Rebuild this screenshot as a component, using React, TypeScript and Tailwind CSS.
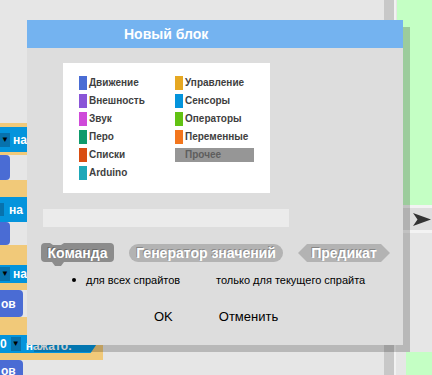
import React from "react";

const leftCats = [
  { name: "Движение", color: "bg-[#4a6cd4]" },
  { name: "Внешность", color: "bg-[#8a55d7]" },
  { name: "Звук", color: "bg-[#cf4ad9]" },
  { name: "Перо", color: "bg-[#0e9a6c]" },
  { name: "Списки", color: "bg-[#d94d11]" },
  { name: "Arduino", color: "bg-[#1ea8b8]" },
];

const rightCats = [
  { name: "Управление", color: "bg-[#e6a822]" },
  { name: "Сенсоры", color: "bg-[#0494dc]" },
  { name: "Операторы", color: "bg-[#62c213]" },
  { name: "Переменные", color: "bg-[#f3761d]" },
  { name: "Прочее", color: "bg-[#969696]", selected: true },
];

function Category({ name, color, selected }: { name: string; color: string; selected?: boolean }) {
  return (
    <div className={`flex h-[14px] w-[79px] items-center ${selected ? "bg-[#969696]" : ""}`}>
      <span className={`h-[14px] w-[8px] shrink-0 ${color}`} />
      <span
        className={`ml-[2px] text-[10px] font-bold leading-none ${
          selected ? "text-[#5e5e5e]" : "text-[#3f3f3f]"
        }`}
      >
        {name}
      </span>
    </div>
  );
}

const blockText =
  "absolute inset-0 flex items-center justify-center text-[14px] font-bold leading-none text-white [text-shadow:-1px_-1px_0_rgba(0,0,0,0.25)]";

function ShapeRow() {
  return (
    <div className="ml-[14px] mt-[16px] flex h-[19px] items-start gap-[15px]">
      {/* Command */}
      <div className="relative h-[23px] w-[73px] shrink-0">
        <svg width="73" height="23" className="absolute left-0 top-0">
          <path
            d="M0,4 Q0,0 4,0 L9,0 L12,2 L20,2 L23,0 L69,0 Q73,0 73,4 L73,15 Q73,19 69,19 L23,19 L20,23 L14,23 L11,19 L4,19 Q0,19 0,15 Z"
            fill="#8c8c8c"
          />
        </svg>
        <div className={`${blockText} h-[19px]`}>Команда</div>
      </div>
      {/* Reporter */}
      <div className="relative mt-[1px] h-[18px] w-[154px] shrink-0 rounded-full bg-[#b3b3b3]">
        <div className={blockText}>Генератор значений</div>
      </div>
      {/* Predicate */}
      <div className="relative mt-[1px] h-[18px] w-[92px] shrink-0">
        <svg width="92" height="18" className="absolute left-0 top-0">
          <polygon points="0,9 9,0 83,0 92,9 83,18 9,18" fill="#b3b3b3" />
        </svg>
        <div className={blockText}>Предикат</div>
      </div>
    </div>
  );
}

function Dialog() {
  return (
    <div className="absolute left-[27px] top-[20px] z-10 flex h-[325px] w-[376px] flex-col bg-[#dddddd] shadow-[7px_7px_0_rgba(0,0,0,0.2)]">
      {/* Title */}
      <div className="flex h-[28px] shrink-0 items-center bg-[#74b3f0] pl-[97px] text-[14px] font-bold text-white">
        Новый блок
      </div>

      {/* Categories */}
      <div className="ml-[36px] mt-[15px] flex h-[130px] w-[207px] bg-white pl-[16px] pt-[13px]">
        <div className="flex w-[96px] flex-col gap-[4px]">
          {leftCats.map((c) => (
            <Category key={c.name} {...c} />
          ))}
        </div>
        <div className="flex flex-col gap-[4px]">
          {rightCats.map((c) => (
            <Category key={c.name} {...c} />
          ))}
        </div>
      </div>

      {/* Name input */}
      <div className="ml-[16px] mt-[16px] h-[18px] w-[246px] bg-[#ebebeb]" />

      <ShapeRow />

      {/* Scope */}
      <div className="mt-[12px] flex h-[12px] items-center pl-[45px] text-[11px] leading-none text-black">
        <span className="h-[4px] w-[4px] rounded-full bg-black" />
        <span className="ml-[10px] w-[130px]">для всех спрайтов</span>
        <span>только для текущего спрайта</span>
      </div>

      {/* Buttons */}
      <div className="mt-[22px] flex h-[16px] items-center gap-[46px] pl-[127px] text-[13px] leading-none text-black">
        <span>OK</span>
        <span>Отменить</span>
      </div>
    </div>
  );
}

const label = "text-[12px] font-bold leading-none text-white";

function Dropdown({ children }: { children?: React.ReactNode }) {
  return (
    <div className="flex h-[14px] w-[10px] shrink-0 items-center justify-center bg-[#0772ad] text-[8px] text-black">
      {children}
    </div>
  );
}

function Mouth({ h, w, children }: { h: string; w: string; children: React.ReactNode }) {
  return (
    <div className={`flex w-[40px] bg-[#e6e6e6] ${h}`}>
      <div className={`flex h-full items-center justify-end rounded-r-[4px] bg-[#4a6cd4] pr-[10px] ${w}`}>
        {children}
      </div>
    </div>
  );
}

function ScriptArea() {
  return (
    <div className="absolute left-0 top-[123px] flex flex-col items-start">
      <div className="h-[4px] w-[40px] bg-[#f1c979]" />
      <div className="flex h-[25px] w-[40px] items-center gap-[3px] bg-[#0494dc]">
        <Dropdown>▼</Dropdown>
        <span className={label}>на</span>
      </div>
      <div className="h-[3px] w-[40px] bg-[#f1c979]" />
      <Mouth h="h-[25px]" w="w-[4px]">{null}</Mouth>
      <div className="h-[17px] w-[40px] bg-[#f1c979]" />
      <div className="flex h-[25px] w-[40px] items-center gap-[5px] bg-[#0494dc]">
        <div className="h-[13px] w-[4px] bg-[#0772ad]" />
        <span className={label}>на</span>
      </div>
      <Mouth h="h-[23px]" w="w-[8px]">{null}</Mouth>
      <div className="h-[20px] w-[40px] bg-[#f1c979]" />
      <div className="flex h-[18px] w-[40px] items-center gap-[3px] bg-[#0494dc]">
        <Dropdown>▼</Dropdown>
        <span className={label}>на</span>
      </div>
      <div className="h-[7px] w-[40px] bg-[#f1c979]" />
      <Mouth h="h-[27px]" w="w-[23px]">
        <span className={`${label} -mr-[10px] w-[23px] pl-[1px]`}>ов</span>
      </Mouth>
      <div className="h-[18px] w-[40px] bg-[#f1c979]" />
      <div className="flex w-[103px] flex-col bg-[#f1c979]">
        <div className="flex h-[18px] w-[103px] items-center gap-[4px] bg-[#0494dc] [clip-path:polygon(0_0,100%_0,88%_100%,0_100%)]">
          <span className={label}>0</span>
          <Dropdown>▼</Dropdown>
          <span className={`${label} ml-[1px] mt-[3px]`}>нажато:</span>
        </div>
        <div className="h-[7px]" />
      </div>
      <div className="flex h-[25px] w-[23px] items-start rounded-r-[4px] bg-[#4a6cd4] pl-[1px] pt-[5px]">
        <span className={label}>ов</span>
      </div>
    </div>
  );
}

function StageSide() {
  return (
    <div className="absolute left-[384px] top-0 flex h-[375px]">
      <div className="h-full w-[10px] bg-[#c8c8c8]" />
      <div className="h-full w-[2px] bg-[#f2f2f2]" />
      <div className="flex w-[36px] flex-col">
        <div className="ml-[1px] h-[205px] bg-[#c4ffc4]" />
        <div className="flex h-[28px] items-center border-y-[3px] border-[#f3f3f3] bg-[#dedede] pl-[17px]">
          <svg width="18" height="13">
            <path d="M0,0 L18,6.5 L0,13 L4.5,6.5 Z" fill="#333333" />
          </svg>
        </div>
        <div className="h-[119px]" />
        <div className="ml-[10px] flex-1 bg-[#c4ffc4]" />
      </div>
    </div>
  );
}

export default function App() {
  return (
    <div className="relative h-[375px] w-[432px] overflow-hidden bg-[#e6e6e6] font-['Liberation_Sans',Arial,sans-serif]">
      <ScriptArea />
      <StageSide />
      <Dialog />
    </div>
  );
}
